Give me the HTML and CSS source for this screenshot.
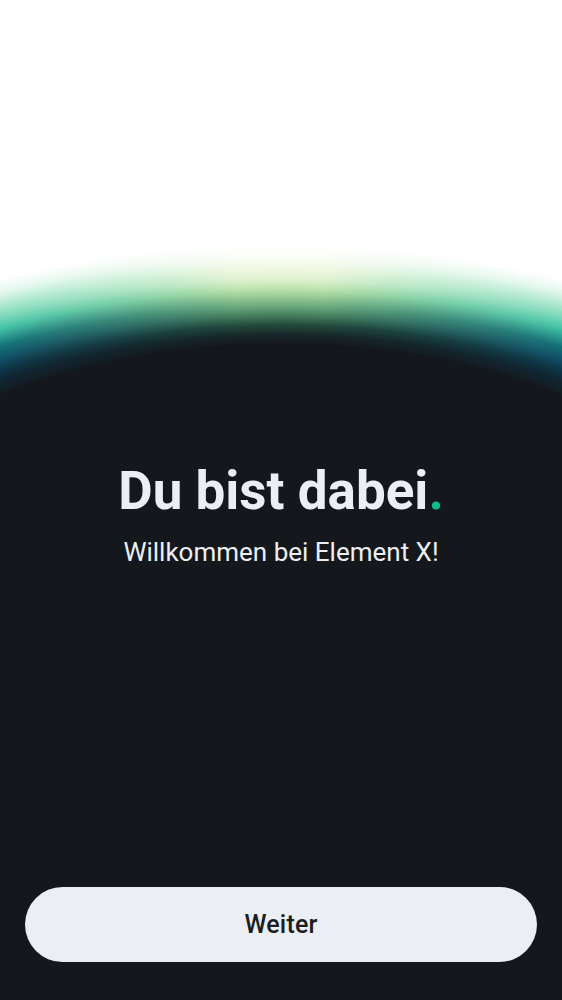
FILE: index.html
```html
<!DOCTYPE html>
<html lang="de">
<head>
<meta charset="utf-8">
<title>Du bist dabei</title>
<link rel="stylesheet" href="styles.css">
</head>
<body>
<main class="screen">
  <div class="glow" aria-hidden="true"></div>
  <section class="hero">
    <h1 class="title">Du bist dabei<span class="dot">.</span></h1>
    <p class="subtitle">Willkommen bei Element X!</p>
  </section>
  <div class="actions">
    <button class="btn-primary" type="button">Weiter</button>
  </div>
</main>
</body>
</html>
```

FILE: styles.css
```css
html, body {
  margin: 0;
  padding: 0;
  background: #14171b;
}

.screen {
  position: relative;
  width: 562px;
  height: 1000px;
  overflow: hidden;
  background: #ffffff;
  display: flex;
  flex-direction: column;
  font-family: Roboto, "Noto Sans", sans-serif;
}

/* decorative backdrop: dark dome with a green/teal halo */
.glow {
  position: absolute;
  inset: 0;
  z-index: 0;
  background:
    linear-gradient(to bottom, transparent 0, transparent 420px, #14171b 420px),
    radial-gradient(ellipse 468px 250px at 50% 595px,
      #14171b 0%,
      #14171b 100%,
      #182629 104%,
      #22493b 108%,
      #47805f 112%,
      #6fae80 116%,
      #b8e0a8 122%,
      #dcf0cc 126%,
      #eef8e0 130%,
      #fafdf5 135%,
      #ffffff 140%);
}

.glow::before {
  content: "";
  position: absolute;
  left: 0;
  right: 0;
  top: 0;
  height: 420px;
  background: radial-gradient(ellipse 468px 250px at 50% 595px,
    rgba(20, 23, 27, 0) 0%,
    rgba(20, 23, 27, 0) 99%,
    #102330 104%,
    #0d3548 108%,
    #10526a 112%,
    #127078 116%,
    #3fbfa5 122%,
    #78d6ba 126%,
    #a8e6cc 130%,
    #e2f7ee 135%,
    #ffffff 140%);
  -webkit-mask-image: linear-gradient(to right, #000 0%, rgba(0,0,0,0.55) 20%, transparent 42%, transparent 58%, rgba(0,0,0,0.55) 80%, #000 100%);
  mask-image: linear-gradient(to right, #000 0%, rgba(0,0,0,0.55) 20%, transparent 42%, transparent 58%, rgba(0,0,0,0.55) 80%, #000 100%);
}

.hero {
  position: relative;
  z-index: 1;
  padding-top: 460px;
  display: flex;
  flex-direction: column;
  align-items: center;
  text-align: center;
  gap: 14px;
}

.title {
  margin: 0;
  font-size: 53px;
  line-height: 62px;
  font-weight: 700;
  color: #ebeef2;
}

.dot {
  color: #0dbd8b;
}

.subtitle {
  margin: 0;
  font-size: 26px;
  line-height: 32px;
  font-weight: 400;
  color: #ebeef2;
}

.actions {
  position: relative;
  z-index: 1;
  margin-top: auto;
  padding: 0 25px 38px;
  display: flex;
}

.btn-primary {
  flex: 1;
  height: 75px;
  border: 0;
  border-radius: 38px;
  background: #ebeef2;
  color: #1b1d22;
  font-family: Roboto, "Noto Sans", sans-serif;
  font-size: 25px;
  font-weight: 500;
  letter-spacing: 0.2px;
  cursor: pointer;
}
```
